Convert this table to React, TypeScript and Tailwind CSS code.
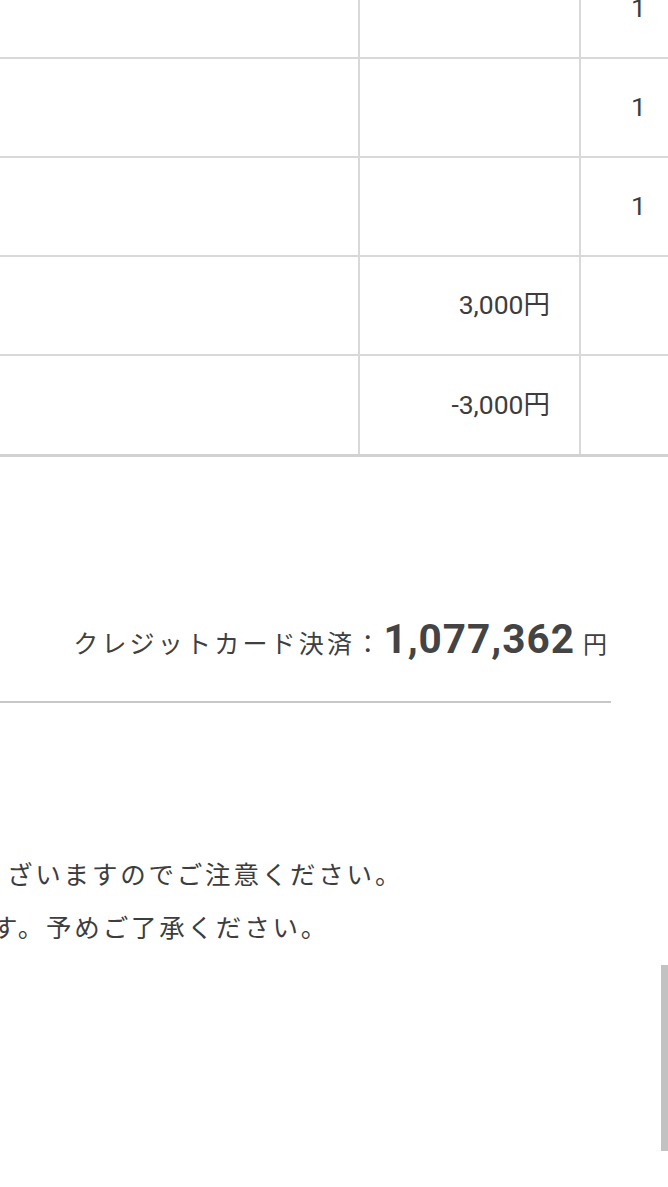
import React from "react";

const rows: { amount?: string; qty?: string }[] = [
  { qty: "1" },
  { qty: "1" },
  { qty: "1" },
  { amount: "3,000円" },
  { amount: "-3,000円" },
];

export default function App() {
  return (
    <div
      className="relative w-[668px] h-[1187px] overflow-hidden bg-white text-[#3d3d3d]"
      style={{ fontFamily: 'Roboto, "Noto Sans CJK JP", sans-serif' }}
    >
      <div className="overflow-hidden">
        <div className="mt-[-40px]">
          {rows.map((r, i) => (
            <div
              key={i}
              className={`flex ${
                i === rows.length - 1
                  ? "border-b-[3px] border-[#d2d2d2] h-[101px]"
                  : "border-b-2 border-[#d9d9d9] h-[99px]"
              }`}
            >
              <div className="w-[360px] shrink-0 border-r-2 border-[#d9d9d9]" />
              <div className="w-[221px] shrink-0 border-r-2 border-[#d9d9d9] flex items-center justify-end pr-[29px] text-[26.5px] leading-none">
                {r.amount}
              </div>
              <div className="flex-1 flex items-center justify-end pr-[22px] text-[26.5px] leading-none">
                {r.qty}
              </div>
            </div>
          ))}
        </div>
      </div>

      <div className="mt-[162px] w-[611px]">
        <div className="flex items-baseline justify-end pr-[4px]">
          <span className="text-[25px] tracking-[3.2px] text-[#404040]">
            クレジットカード決済：
          </span>
          <span className="text-[40.5px] font-bold tracking-[1px] text-[#444444] leading-none">
            1,077,362
          </span>
          <span className="ml-[8px] text-[24px] text-[#404040]">円</span>
        </div>
        <div className="mt-[37px] h-[2px] bg-[#c8c8c8]" />
      </div>

      <div className="mt-[146px] text-[25.5px] tracking-[2.8px] leading-[53px] text-[#3d3d3d] whitespace-nowrap">
        <div className="ml-[7px]">ざいますのでご注意ください。</div>
        <div className="ml-[-8px]">す。予めご了承ください。</div>
      </div>

      <div className="absolute left-[661px] top-[965px] w-[7px] h-[186px] bg-[#c2c2c2]" />
    </div>
  );
}
